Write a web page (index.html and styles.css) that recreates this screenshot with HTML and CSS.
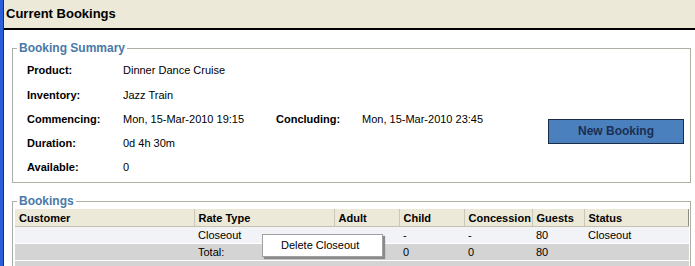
FILE: index.html
```html
<!DOCTYPE html>
<html lang="en">
<head>
  <meta charset="UTF-8">
  <title>Current Bookings</title>
  <link rel="stylesheet" href="styles.css">
</head>
<body>
  <div class="window">
    <div class="panel">
      <div class="title-bar">Current Bookings</div>

      <fieldset class="group summary-box">
        <legend>Booking Summary</legend>
        <div class="summary">
          <span class="lbl">Product:</span>
          <span class="val wide">Dinner Dance Cruise</span>

          <span class="lbl">Inventory:</span>
          <span class="val wide">Jazz Train</span>

          <span class="lbl">Commencing:</span>
          <span class="val">Mon, 15-Mar-2010 19:15</span>
          <span class="lbl second">Concluding:</span>
          <span class="val second">Mon, 15-Mar-2010 23:45</span>

          <span class="lbl">Duration:</span>
          <span class="val wide">0d 4h 30m</span>

          <span class="lbl">Available:</span>
          <span class="val wide">0</span>

          <button class="new-booking">New Booking</button>
        </div>
      </fieldset>

      <fieldset class="group bookings">
        <legend>Bookings</legend>
        <div class="grid-wrap">
          <table class="grid">
            <colgroup>
              <col style="width:179px">
              <col style="width:140px">
              <col style="width:65px">
              <col style="width:65px">
              <col style="width:68px">
              <col style="width:52px">
              <col>
            </colgroup>
            <thead>
              <tr>
                <th>Customer</th>
                <th>Rate Type</th>
                <th>Adult</th>
                <th>Child</th>
                <th>Concession</th>
                <th>Guests</th>
                <th>Status</th>
              </tr>
            </thead>
            <tbody>
              <tr class="row-light">
                <td></td>
                <td>Closeout</td>
                <td></td>
                <td>-</td>
                <td>-</td>
                <td>80</td>
                <td>Closeout</td>
              </tr>
              <tr class="row-total">
                <td></td>
                <td>Total:</td>
                <td></td>
                <td>0</td>
                <td>0</td>
                <td>80</td>
                <td></td>
              </tr>
              <tr class="row-total">
                <td></td><td></td><td></td><td></td><td></td><td></td><td></td>
              </tr>
            </tbody>
          </table>

          <!-- right-click menu -->
          <div class="context-menu">Delete Closeout</div>
        </div>
      </fieldset>
    </div>
  </div>
</body>
</html>
```

FILE: styles.css
```css
html, body {
  margin: 0;
  padding: 0;
  background: #fff;
}
body {
  font-family: 'Liberation Sans', Arial, sans-serif;
  font-size: 11px;
  color: #000;
  overflow: hidden;
}
.window {
  border-left: 3px solid #2b5fd9;
  height: 266px;
}
.panel {
  border-left: 1px solid #1a2d6b;
  height: 266px;
}
.title-bar {
  background: #ece9d8;
  height: 28px;
  line-height: 28px;
  border-bottom: 2px solid #000;
  padding-left: 2px;
  font-size: 13px;
  font-weight: bold;
}
.group {
  margin: 11px 4px 0 8px;
  padding: 0 6px 3px 14px;
  border: 1px solid #aeaea6;
  border-radius: 0;
}
.group legend {
  padding: 0 2px;
  margin-left: -10px;
  color: #4a78a8;
  font-size: 12px;
  font-weight: bold;
  line-height: 14px;
}
.summary {
  display: grid;
  grid-template-columns: 96px 153px 86px 1fr auto;
  grid-template-rows: 24px 25px 24px 24px 24px;
  align-items: center;
  margin-top: 3px;
}
.lbl {
  grid-column: 1;
  font-weight: bold;
}
.val {
  grid-column: 2;
}
.lbl.second {
  grid-column: 3;
}
.val.second {
  grid-column: 4;
}
.val.wide {
  grid-column: 2 / 5;
}
.new-booking {
  grid-column: 5;
  grid-row: 3 / 5;
  justify-self: end;
  align-self: center;
  width: 136px;
  height: 25px;
  margin: 0;
  background: #4a80be;
  border: 1px solid #1b2d48;
  border-radius: 0;
  color: #1b2f52;
  font-family: 'Liberation Sans', Arial, sans-serif;
  font-size: 12px;
  font-weight: bold;
  padding: 0;
}
.bookings {
  margin-top: 11px;
  padding: 1px 1px 0 2px;
  border-bottom: none;
}
.bookings legend {
  margin-left: 2px;
}
.grid-wrap {
  position: relative;
}
.grid {
  width: 100%;
  border-collapse: collapse;
  table-layout: fixed;
}
.grid th {
  background: #ece9d8;
  height: 17px;
  padding: 0 4px;
  text-align: left;
  font-weight: bold;
  border-right: 1px solid #cbc7b8;
  border-bottom: 1px solid #c4c1b1;
  white-space: nowrap;
  overflow: hidden;
}
.grid th:last-child {
  border-right: 1px solid #8f8c80;
}
.grid td {
  height: 16px;
  padding: 0 4px;
  white-space: nowrap;
  overflow: hidden;
  border-bottom: 1px solid #fff;
}
.row-light td {
  background: #f1f3f6;
}
.row-total td {
  background: #d4d4d4;
}
.context-menu {
  position: absolute;
  left: 247px;
  top: 25px;
  width: 101px;
  height: 21px;
  line-height: 21px;
  padding-left: 18px;
  background: #fff;
  border: 1px solid #a0a0a0;
  box-shadow: 2px 2px 1px #8a8a8a;
}
```
